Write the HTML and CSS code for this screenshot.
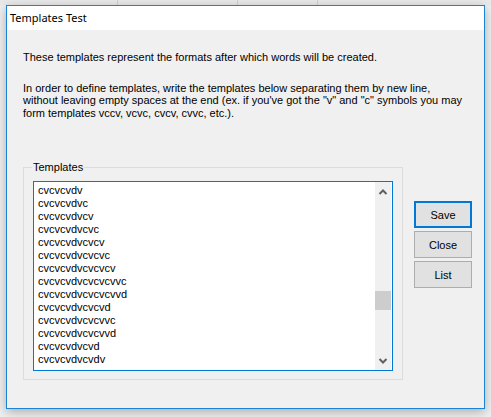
FILE: index.html
```html
<!DOCTYPE html>
<html>
<head>
<meta charset="utf-8">
<link rel="stylesheet" href="styles.css">
</head>
<body>
<div class="desktop">
  <div class="bgbar"><span class="sep s1"></span><span class="sep s2"></span><span class="sep s3"></span></div>
  <div class="window">
    <div class="titlebar">Templates Test</div>
    <div class="content">
      <p class="intro">These templates represent the formats after which words will be created.</p>
      <p class="intro second">In order to define templates, write the templates below separating them by new line,<br>without leaving empty spaces at the end (ex. if you've got the "v" and "c" symbols you may<br>form templates vccv, vcvc, cvcv, cvvc, etc.).</p>
      <div class="main">
        <div class="group">
          <span class="group-label">Templates</span>
          <div class="listbox">
            <ul class="items">
              <li>cvcvcvdv</li>
              <li>cvcvcvdvc</li>
              <li>cvcvcvdvcv</li>
              <li>cvcvcvdvcvc</li>
              <li>cvcvcvdvcvcv</li>
              <li>cvcvcvdvcvcvc</li>
              <li>cvcvcvdvcvcvcv</li>
              <li>cvcvcvdvcvcvcvvc</li>
              <li>cvcvcvdvcvcvcvvd</li>
              <li>cvcvcvdvcvcvd</li>
              <li>cvcvcvdvcvcvvc</li>
              <li>cvcvcvdvcvcvvd</li>
              <li>cvcvcvdvcvd</li>
              <li>cvcvcvdvcvdv</li>
            </ul>
            <div class="scrollbar">
              <svg class="arrow up" width="16" height="17" viewBox="0 0 16 17"><polyline points="4.5,12 8,8.5 11.5,12" fill="none" stroke="#606060" stroke-width="2"/></svg>
              <div class="track"><div class="thumb"></div></div>
              <svg class="arrow down" width="16" height="17" viewBox="0 0 16 17"><polyline points="4.5,6 8,9.5 11.5,6" fill="none" stroke="#606060" stroke-width="2"/></svg>
            </div>
          </div>
        </div>
        <div class="buttons">
          <button class="btn default">Save</button>
          <button class="btn">Close</button>
          <button class="btn">List</button>
        </div>
      </div>
    </div>
  </div>
</div>
</body>
</html>
```

FILE: styles.css
```css
html, body {
  margin: 0;
  padding: 0;
}
body {
  background: #efefef;
  font-family: "Liberation Sans", Arial, sans-serif;
  font-size: 11px;
  color: #000;
  overflow: hidden;
}
.desktop {
  position: relative;
  width: 491px;
  height: 417px;
  padding: 5px 0 0 6px;
  box-sizing: border-box;
  background: #efefef;
}
.bgbar {
  position: absolute;
  left: 0;
  top: 0;
  width: 491px;
  height: 5px;
  background: #e9e9e9;
}
.sep {
  position: absolute;
  top: 0;
  width: 1px;
  height: 5px;
  background: #cfcfcf;
}
.s1 { left: 117px; }
.s2 { left: 237px; }
.s3 { left: 317px; }
.window {
  position: relative;
  width: 479px;
  height: 404px;
  box-sizing: border-box;
  border: 1px solid #1883d7;
  background: #f0f0f0;
  box-shadow: 0 3px 10px rgba(0, 0, 0, 0.28);
}
.titlebar {
  height: 24px;
  line-height: 24px;
  background: #fff;
  padding-left: 3px;
  font-family: "Noto Sans", "Open Sans", sans-serif;
  font-size: 11px;
}
.content {
  padding: 21px 0 0 16px;
}
.intro {
  margin: 0;
  line-height: 12.5px;
  white-space: nowrap;
}
.second {
  margin-top: 18px;
}
.main {
  display: flex;
  align-items: flex-start;
  gap: 11px;
  margin-top: 48px;
}
.group {
  position: relative;
  width: 380px;
  height: 213px;
  box-sizing: border-box;
  border: 1px solid #dcdcdc;
  padding: 13px 9px 0 9px;
}
.group-label {
  position: absolute;
  left: 8px;
  top: -9px;
  padding: 0 1px;
  background: #f0f0f0;
  line-height: 16px;
}
.listbox {
  display: flex;
  height: 190px;
  box-sizing: border-box;
  border: 1px solid #0078d7;
  background: #fff;
  padding-right: 1px;
}
.items {
  flex: 1;
  list-style: none;
  margin: 0;
  padding: 2px 0 0 4px;
  line-height: 13px;
  overflow: hidden;
}
.scrollbar {
  width: 16px;
  display: flex;
  flex-direction: column;
  background: #f0f0f0;
}
.arrow {
  display: block;
  flex: none;
}
.track {
  flex: 1;
}
.thumb {
  margin-top: 92px;
  height: 19px;
  background: #cdcdcd;
}
.buttons {
  display: flex;
  flex-direction: column;
  gap: 3px;
  margin-top: 34px;
}
.btn {
  width: 58px;
  height: 27px;
  box-sizing: border-box;
  margin: 0;
  padding: 0;
  font-family: inherit;
  font-size: 11px;
  color: #000;
  background: #e1e1e1;
  border: 1px solid #adadad;
  border-radius: 0;
}
.btn.default {
  border: 2px solid #0078d7;
}
```
